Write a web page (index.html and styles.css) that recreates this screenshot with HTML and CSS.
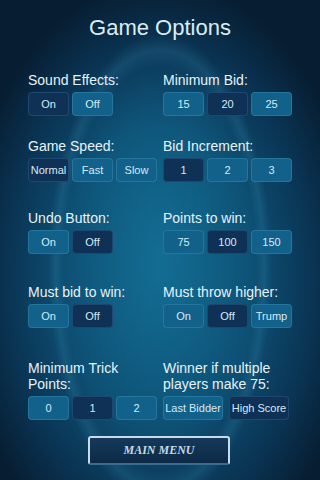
FILE: index.html
```html
<!DOCTYPE html>
<html lang="en">
<head>
  <meta charset="UTF-8">
  <title>Game Options</title>
  <link rel="stylesheet" href="styles.css">
</head>
<body>
  <h1 class="title">Game Options</h1>

  <div class="options">
    <div class="row">
      <div class="opt">
        <div class="label">Sound Effects:</div>
        <div class="choices">
          <div class="choice sel">On</div>
          <div class="choice">Off</div>
        </div>
      </div>
      <div class="opt">
        <div class="label">Minimum Bid:</div>
        <div class="choices">
          <div class="choice">15</div>
          <div class="choice sel">20</div>
          <div class="choice">25</div>
        </div>
      </div>
    </div>

    <div class="row">
      <div class="opt">
        <div class="label">Game Speed:</div>
        <div class="choices">
          <div class="choice sel">Normal</div>
          <div class="choice">Fast</div>
          <div class="choice">Slow</div>
        </div>
      </div>
      <div class="opt">
        <div class="label">Bid Increment:</div>
        <div class="choices">
          <div class="choice sel">1</div>
          <div class="choice">2</div>
          <div class="choice">3</div>
        </div>
      </div>
    </div>

    <div class="row">
      <div class="opt">
        <div class="label">Undo Button:</div>
        <div class="choices">
          <div class="choice">On</div>
          <div class="choice sel">Off</div>
        </div>
      </div>
      <div class="opt">
        <div class="label">Points to win:</div>
        <div class="choices">
          <div class="choice">75</div>
          <div class="choice sel">100</div>
          <div class="choice">150</div>
        </div>
      </div>
    </div>

    <div class="row">
      <div class="opt">
        <div class="label">Must bid to win:</div>
        <div class="choices">
          <div class="choice">On</div>
          <div class="choice sel">Off</div>
        </div>
      </div>
      <div class="opt">
        <div class="label">Must throw higher:</div>
        <div class="choices">
          <div class="choice">On</div>
          <div class="choice sel">Off</div>
          <div class="choice">Trump</div>
        </div>
      </div>
    </div>

    <div class="row">
      <div class="opt">
        <div class="label">Minimum Trick<br>Points:</div>
        <div class="choices">
          <div class="choice">0</div>
          <div class="choice sel">1</div>
          <div class="choice">2</div>
        </div>
      </div>
      <div class="opt">
        <div class="label">Winner if multiple<br>players make 75:</div>
        <div class="choices wide">
          <div class="choice">Last Bidder</div>
          <div class="choice sel">High Score</div>
        </div>
      </div>
    </div>
  </div>

  <div class="footer">
    <div class="menu-btn">MAIN MENU</div>
  </div>
</body>
</html>
```

FILE: styles.css
```css
html, body {
  margin: 0;
  width: 320px;
  height: 480px;
  overflow: hidden;
}

body {
  font-family: "Liberation Sans", Arial, sans-serif;
  color: #e6f3fa;
  background:
    radial-gradient(ellipse 112px 235px at 50% 56%, rgba(70, 170, 210, 0) 86%, rgba(70, 170, 210, 0.16) 93%, rgba(70, 170, 210, 0) 100%),
    radial-gradient(ellipse 105px 210px at 50% 52%, rgba(24, 130, 170, 0.45), rgba(24, 130, 170, 0) 100%),
    radial-gradient(ellipse 200px 300px at 50% 58%, #0f5d82 0%, #0d4d71 50%, #0a3352 78%, #071d31 100%);
}

.title {
  margin: 14px 0 0;
  font-size: 22px;
  line-height: 28px;
  font-weight: normal;
  text-align: center;
  color: #dcecf4;
}

.options {
  padding: 30px 0 0 28px;
}

.row {
  display: grid;
  grid-template-columns: 135px 1fr;
}

.row:nth-child(2) { margin-top: 22px; }
.row:nth-child(3) { margin-top: 28px; }
.row:nth-child(4) { margin-top: 30px; }
.row:nth-child(5) { margin-top: 32px; }

.label {
  font-size: 14px;
  line-height: 16px;
  margin-bottom: 4px;
}

.choices {
  display: flex;
  gap: 3px;
}

.choice {
  width: 39px;
  height: 22px;
  border: 1px solid rgba(110, 190, 225, 0.22);
  border-radius: 4px;
  background: #12618a;
  color: #d4ebf6;
  font-size: 11px;
  display: flex;
  justify-content: center;
  align-items: center;
}

.choice.sel {
  background: #0f3156;
  border-color: rgba(90, 150, 200, 0.22);
}

.wide {
  gap: 6px;
}

.wide .choice {
  width: 58px;
}

.footer {
  display: flex;
  justify-content: center;
  padding: 16px 2px 0 0;
}

.menu-btn {
  width: 138px;
  height: 25px;
  border: 2px solid #c6dcea;
  border-bottom-color: #3a6a8c;
  border-radius: 3px;
  background: linear-gradient(#15395a, #0c2a46);
  color: #c4dcec;
  font-family: "Liberation Serif", "Times New Roman", serif;
  font-style: italic;
  font-weight: bold;
  font-size: 12px;
  display: flex;
  justify-content: center;
  align-items: center;
}
```
